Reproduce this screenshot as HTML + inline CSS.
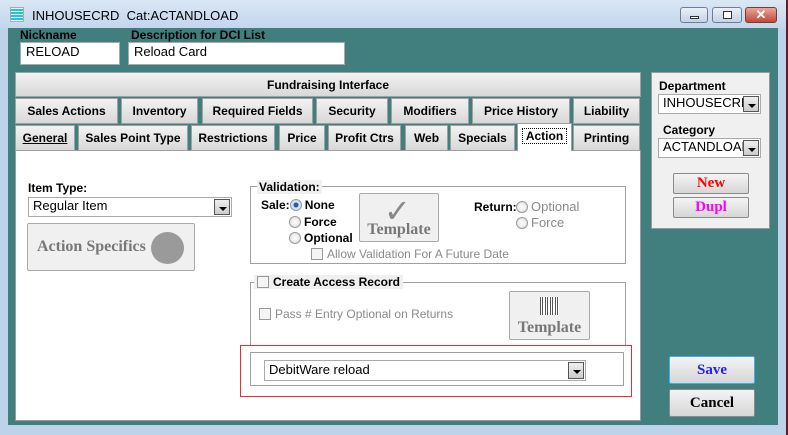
<!DOCTYPE html>
<html><head><style>
*{box-sizing:border-box;margin:0;padding:0}
body{width:788px;height:435px;position:relative;overflow:hidden;background:#bcd3ea;font-family:"Liberation Sans",Arial,sans-serif;font-size:12px;color:#000}
.a{position:absolute}
.b{font-weight:bold}
.inp{position:absolute;background:#fff;border:1px solid #aaa;padding:2px 5px;font-size:12px;line-height:14px}
.tab{position:absolute;height:26px;background:linear-gradient(#f2f2f2,#d8d8d8);border:1px solid #a0a0a0;font-weight:bold;font-size:12px;text-align:center;line-height:24px}
.dd{position:absolute;right:1px;top:1px;bottom:1px;width:16px;background:linear-gradient(#eee,#ccc);border:1px solid #555}
.dd:after{content:"";position:absolute;left:4px;top:7px;border-left:4px solid transparent;border-right:4px solid transparent;border-top:4px solid #000}
.btn{position:absolute;background:linear-gradient(#f4f4f4,#d6d6d6);border:1px solid #8a8a8a;border-radius:2px;font-family:"Liberation Serif",serif;font-weight:bold;text-align:center}
.fs{position:absolute;border:1px solid #a0a0a0}
.rad{display:inline-block;width:12px;height:12px;border-radius:50%;border:1px solid #999;background:radial-gradient(#fff,#ddd);vertical-align:-2px;margin-right:3px}
.cb{display:inline-block;width:12px;height:12px;border:1px solid #999;background:#f4f4f4;vertical-align:-2px;margin-right:4px}
.g{color:#8a8a8a}
.t13{font-size:13px}
</style></head><body>
<div class="a" style="left:0;top:0;width:788px;height:28px;background:linear-gradient(#dae7f5,#c3d6ec)"></div>
<div class="a" style="left:10px;top:7px;width:14px;height:15px;background:repeating-linear-gradient(#fff 0 1px,#17c9e0 1px 3px);border:1px solid #aaa"></div>
<div class="a" style="left:32px;top:8px;font-size:13px">INHOUSECRD&nbsp; Cat:ACTANDLOAD</div>
<div class="a" style="left:680px;top:7px;width:28px;height:16px;border:1px solid #6d7d96;border-radius:3px;background:linear-gradient(#eaf0f8,#c4d2e4)"><div class="a" style="left:9px;top:8px;width:9px;height:3px;border:1px solid #333;background:#fff"></div></div>
<div class="a" style="left:712px;top:7px;width:30px;height:16px;border:1px solid #6d7d96;border-radius:3px;background:linear-gradient(#eaf0f8,#c4d2e4)"><div class="a" style="left:10px;top:3px;width:9px;height:8px;border:1px solid #333;background:#fff"></div></div>
<div class="a" style="left:745px;top:7px;width:32px;height:16px;border:1px solid #7a3a30;border-radius:3px;background:linear-gradient(#e9a699,#c0473a);color:#fff;font-weight:bold;text-align:center;line-height:14px;font-size:13px">✕</div>
<div class="a" style="left:8px;top:28px;width:770px;height:397px;background:#417f7f"></div>
<div class="a" style="left:786px;top:0;width:2px;height:435px;background:#6b1a1a"></div>
<div class="a b" style="left:20px;top:28px">Nickname</div>
<div class="a b" style="left:131px;top:28px">Description for DCI List</div>
<div class="inp t13" style="left:20px;top:42px;width:100px;height:23px">RELOAD</div>
<div class="inp t13" style="left:128px;top:42px;width:217px;height:23px">Reload Card</div>
<div class="tab" style="left:15px;top:72px;width:626px;height:25px">Fundraising Interface</div>
<div class="tab" style="left:15px;top:98px;width:103px">Sales Actions</div>
<div class="tab" style="left:121px;top:98px;width:77px">Inventory</div>
<div class="tab" style="left:202px;top:98px;width:111px">Required Fields</div>
<div class="tab" style="left:316px;top:98px;width:72px">Security</div>
<div class="tab" style="left:391px;top:98px;width:78px">Modifiers</div>
<div class="tab" style="left:472px;top:98px;width:98px">Price History</div>
<div class="tab" style="left:573px;top:98px;width:67px">Liability</div>
<div class="a" style="left:15px;top:150px;width:626px;height:271px;background:#fff;border:1px solid #999"></div>
<div class="tab" style="left:15px;top:125px;width:60px"><u>General</u></div>
<div class="tab" style="left:78px;top:125px;width:110px">Sales Point Type</div>
<div class="tab" style="left:191px;top:125px;width:84px">Restrictions</div>
<div class="tab" style="left:279px;top:125px;width:46px">Price</div>
<div class="tab" style="left:328px;top:125px;width:73px">Profit Ctrs</div>
<div class="tab" style="left:405px;top:125px;width:43px">Web</div>
<div class="tab" style="left:450px;top:125px;width:65px">Specials</div>
<div class="tab" style="left:517px;top:123px;width:55px;height:28px;background:#fff;border-bottom:none"><span style="border:1px dotted #000;padding:0 3px">Action</span></div>
<div class="tab" style="left:573px;top:125px;width:67px">Printing</div>
<div class="a b" style="left:28px;top:181px">Item Type:</div>
<div class="inp t13" style="left:28px;top:197px;width:204px;height:20px;padding:1px 4px">Regular Item<div class="dd"></div></div>
<div class="btn" style="left:27px;top:223px;width:168px;height:48px;border-color:#aaa;background:#f0f0f0;color:#777;font-size:16px;line-height:46px;text-align:left;padding-left:9px">Action Specifics<div class="a" style="left:123px;top:8px;width:33px;height:32px;border-radius:50%;background:#9a9a9a"></div></div>
<div class="fs" style="left:250px;top:186px;width:376px;height:78px"></div>
<div class="a b" style="left:257px;top:180px;background:#f0f0f0;padding:0 2px">Validation:</div>
<div class="a b" style="left:261px;top:198px">Sale:<span class="rad" style="background:radial-gradient(#1d5fa0 30%,#cfe4f6 40%)"></span>None</div>
<div class="a b" style="left:289px;top:215px"><span class="rad"></span>Force</div>
<div class="a b" style="left:289px;top:231px"><span class="rad"></span>Optional</div>
<div class="a g" style="left:311px;top:247px"><span class="cb"></span>Allow Validation For A Future Date</div>
<div class="btn" style="left:359px;top:193px;width:80px;height:49px;background:#f0f0f0;border-color:#aaa;color:#777;font-size:16px;padding-top:27px">Template<div class="a" style="left:24px;top:-2px;font-size:32px;color:#888;font-family:'DejaVu Sans'">✓</div></div>
<div class="a b" style="left:474px;top:200px">Return:</div>
<div class="a g t13" style="left:516px;top:199px"><span class="rad"></span>Optional</div>
<div class="a g t13" style="left:516px;top:215px"><span class="rad"></span>Force</div>
<div class="fs" style="left:250px;top:282px;width:376px;height:64px"></div>
<div class="a b" style="left:254px;top:275px;background:#f0f0f0;padding:0 3px"><span class="cb"></span>Create Access Record</div>
<div class="a g" style="left:259px;top:307px"><span class="cb"></span>Pass # Entry Optional on Returns</div>
<div class="btn" style="left:509px;top:291px;width:81px;height:49px;background:#f0f0f0;border-color:#aaa;color:#777;font-size:16px;padding-top:27px">Template<div class="a" style="left:30px;top:5px;width:19px;height:18px;background:repeating-linear-gradient(90deg,#555 0 1px,#fff 1px 2px,#555 2px 3px,#fff 3px 5px)"></div></div>
<div class="a" style="left:240px;top:345px;width:392px;height:52px;border:1px solid #e03030"></div>
<div class="fs" style="left:250px;top:352px;width:374px;height:34px"></div>
<div class="inp t13" style="left:264px;top:360px;width:322px;height:21px;padding:2px 4px">DebitWare reload<div class="dd"></div></div>
<div class="a" style="left:651px;top:72px;width:119px;height:157px;background:#f0f0f0;border:1px solid #999"></div>
<div class="a b" style="left:659px;top:79px">Department</div>
<div class="inp t13" style="left:658px;top:94px;width:103px;height:20px;padding:1px 4px;overflow:hidden;white-space:nowrap">INHOUSECRD<div class="dd"></div></div>
<div class="a b" style="left:663px;top:123px">Category</div>
<div class="inp t13" style="left:658px;top:138px;width:103px;height:20px;padding:1px 4px;overflow:hidden;white-space:nowrap">ACTANDLOAD<div class="dd"></div></div>
<div class="btn" style="left:673px;top:173px;width:76px;height:21px;color:#f00;font-size:15px;line-height:19px">New</div>
<div class="btn" style="left:673px;top:197px;width:76px;height:21px;color:#f0f;font-size:15px;line-height:19px">Dupl</div>
<div class="btn" style="left:669px;top:356px;width:86px;height:28px;color:#22e;font-size:15px;line-height:26px;border-color:#3cb0e8">Save</div>
<div class="btn" style="left:669px;top:389px;width:86px;height:28px;color:#000;font-size:15px;line-height:26px">Cancel</div>
</body></html>
